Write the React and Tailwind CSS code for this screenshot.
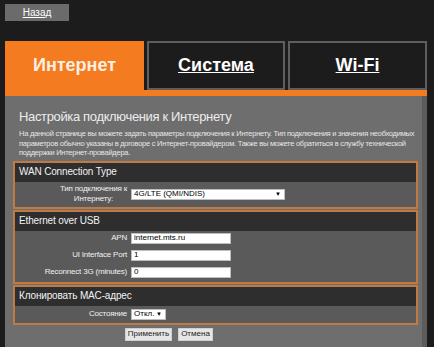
import React from "react";

function Section({ title, children, bodyClass }) {
  return (
    <div className="border-2 border-[#c27a45]">
      <div className="h-[19px] bg-[#2e2e2e] pl-[4px] flex items-center text-[10px] tracking-[-0.15px] text-[#f2f2f2] leading-none">
        {title}
      </div>
      <div className={"bg-[#5a5a5a] " + bodyClass}>{children}</div>
    </div>
  );
}

function Row({ label, children }) {
  return (
    <div className="flex items-center h-[11px]">
      <div className="w-[116px] shrink-0 text-right pr-[4px] text-[8px] tracking-[-0.2px] text-[#f0f0f0] leading-none whitespace-nowrap">
        {label}
      </div>
      {children}
    </div>
  );
}

function Input({ value, w }) {
  return (
    <div
      className={
        "h-[11px] bg-white border border-[#bdbdbd] text-[8px] text-black leading-none flex items-center pl-[2px] " +
        w
      }
    >
      {value}
    </div>
  );
}

function Select({ value, w }) {
  return (
    <div
      className={
        "h-[11px] bg-white border border-[#bdbdbd] text-[8px] text-black leading-none flex items-center justify-between pl-[2px] pr-[3px] " +
        w
      }
    >
      <span>{value}</span>
      <span className="text-[6px]">▼</span>
    </div>
  );
}

export default function App() {
  return (
    <div
      className="w-[434px] h-[347px] overflow-hidden bg-[#1c1c1c] pl-[5px] pr-[7px]"
      style={{ fontFamily: '"Liberation Sans", Arial, sans-serif' }}
    >
      <div className="pt-[4px]">
        <div className="w-[64px] h-[17px] bg-[#6b6b6b] flex items-center justify-center text-[10px] text-white underline leading-none">
          Назад
        </div>
      </div>

      <div className="mt-[20px] flex gap-[3px] h-[49px]">
        <div className="w-[139px] bg-[#f47b20] flex items-center justify-center text-[18px] font-bold text-[#fbeee2]">
          Интернет
        </div>
        <div className="w-[138px] border-2 border-[#5e5e5e] flex items-center justify-center text-[18px] font-bold text-white underline">
          Система
        </div>
        <div className="flex-1 border-2 border-[#5e5e5e] flex items-center justify-center text-[18px] font-bold text-white underline">
          Wi-Fi
        </div>
      </div>
      <div className="h-[6px] bg-[#f47b20]" />

      <div className="bg-[#6e6e6e] h-[260px] pl-[8px] pr-[4px] border-r-[5px] border-[#5c5c5c]">
        <div className="pt-[12px] pl-[6px] text-[13px] tracking-[-0.35px] leading-[18px] text-[#ececec]">
          Настройка подключения к Интернету
        </div>
        <div className="mt-[3px] pl-[6px] text-[7.5px] tracking-[-0.25px] leading-[9.5px] text-[#e6e6e6] whitespace-nowrap">
          На данной странице вы можете задать параметры подключения к Интернету. Тип подключения и значения необходимых
          <br />
          параметров обычно указаны в договоре с Интернет-провайдером. Также вы можете обратиться в службу технической
          <br />
          поддержки Интернет-провайдера.
        </div>

        <div className="mt-[3px] flex flex-col gap-[1px]">
          <Section title="WAN Connection Type" bodyClass="h-[25px] flex items-center">
            <div className="w-[116px] shrink-0 flex justify-end pr-[4px]">
              <span className="text-center text-[8px] tracking-[-0.2px] leading-[10px] text-[#f0f0f0]">
                Тип подключения к
                <br />
                Интернету:
              </span>
            </div>
            <Select value="4G/LTE (QMI/NDIS)" w="w-[154px]" />
          </Section>

          <Section title="Ethernet over USB" bodyClass="pt-[2px] pb-[4px] flex flex-col gap-[6px]">
            <Row label="APN">
              <Input value="internet.mts.ru" w="w-[100px]" />
            </Row>
            <Row label="UI Interface Port">
              <Input value="1" w="w-[100px]" />
            </Row>
            <Row label="Reconnect 3G (minutes)">
              <Input value="0" w="w-[100px]" />
            </Row>
          </Section>

          <Section title="Клонировать MAC-адрес" bodyClass="py-[3px]">
            <Row label="Состояние">
              <Select value="Откл." w="w-[35px]" />
            </Row>
          </Section>
        </div>

        <div className="mt-[3px] flex gap-[6px] pl-[112px]">
          <div className="w-[47px] h-[13px] bg-[#e6e6e6] border border-[#cfcfcf] flex items-center justify-center text-[8px] text-[#222] leading-none">
            Применить
          </div>
          <div className="w-[35px] h-[13px] bg-[#e6e6e6] border border-[#cfcfcf] flex items-center justify-center text-[8px] text-[#222] leading-none">
            Отмена
          </div>
        </div>
      </div>
    </div>
  );
}
